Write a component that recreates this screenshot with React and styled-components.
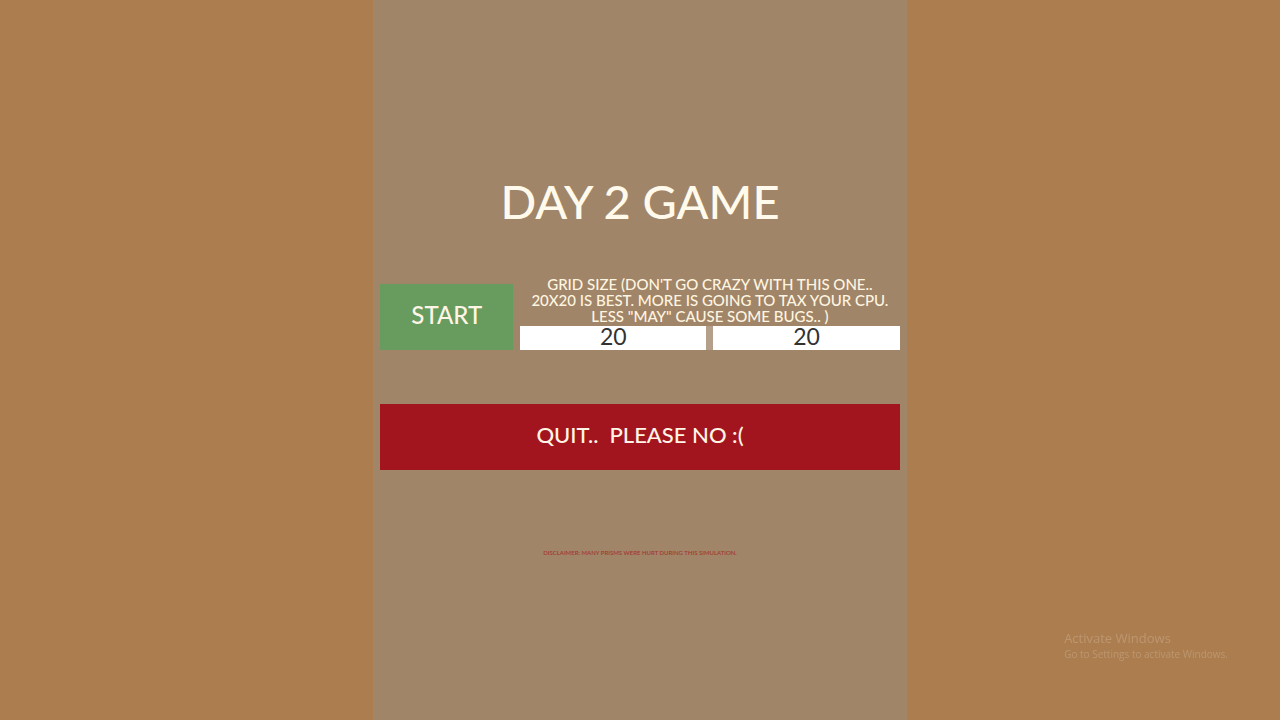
import React, { useState } from "react";
import styled, { createGlobalStyle } from "styled-components";

const App = () => {
    const [columns, setColumns] = useState("20");
    const [rows, setRows] = useState("20");

    return (
        <>
            <GlobalStyle />
            <Screen>
                <Panel>
                    <Title>DAY 2 GAME</Title>
                    <StartRow>
                        <MenuButton type="button" $color="#689b5e" $size="24px">START</MenuButton>
                        <GridSettings>
                            <Hint id="grid-hint" htmlFor="grid-columns">
                                GRID SIZE (DON'T GO CRAZY WITH THIS ONE..
                                <br />
                                20X20 IS BEST. MORE IS GOING TO TAX YOUR CPU.
                                <br />
                                LESS "MAY" CAUSE SOME BUGS.. )
                            </Hint>
                            <SizeInputs>
                                <SizeInput
                                    id="grid-columns"
                                    inputMode="numeric"
                                    value={columns}
                                    onChange={(e) => setColumns(e.target.value)}
                                />
                                <SizeInput
                                    id="grid-rows"
                                    aria-labelledby="grid-hint"
                                    inputMode="numeric"
                                    value={rows}
                                    onChange={(e) => setRows(e.target.value)}
                                />
                            </SizeInputs>
                        </GridSettings>
                    </StartRow>
                    <MenuButton type="button" $color="#a3151e" $size="22px">QUIT..&nbsp; PLEASE NO :(</MenuButton>
                    <Disclaimer>DISCLAIMER: MANY PRISMS WERE HURT DURING THIS SIMULATION.</Disclaimer>
                </Panel>
            </Screen>
            <Watermark>
                <WatermarkTitle>Activate Windows</WatermarkTitle>
                <WatermarkText>Go to Settings to activate Windows.</WatermarkText>
            </Watermark>
        </>
    );
};

export default App;


const GlobalStyle = createGlobalStyle`
    * {
        box-sizing: border-box;
    }

    body {
        margin: 0;
        background: #ac7e4f;
        font-family: Lato, "Open Sans", sans-serif;
    }
`;

const Screen = styled.main`
    display: grid;
    grid-template-columns: minmax(0, 7fr) minmax(0, 10fr) minmax(0, 7fr);
    min-height: 100vh;
`;

const Panel = styled.section`
    grid-column: 2;
    display: flex;
    flex-direction: column;
    justify-content: center;
    padding: 10px 7px 0;
    background: #a08568;
`;

const Title = styled.h1`
    margin: 0 0 46px;
    color: #fffaeb;
    font-size: 47px;
    font-weight: 500;
    line-height: 58px;
    text-align: center;
`;

const StartRow = styled.div`
    display: grid;
    grid-template-columns: minmax(0, 133fr) minmax(0, 380fr);
    align-items: end;
    gap: 7px;
    margin-bottom: 54px;
`;

const MenuButton = styled.button`
    width: 100%;
    height: 66px;
    padding: 0 0 6px;
    border: none;
    background: ${(props) => props.$color};
    color: #fff5e6;
    font-family: inherit;
    font-size: ${(props) => props.$size};
    font-weight: 500;
    cursor: pointer;

    &:hover {
        filter: brightness(1.1);
    }
`;

const GridSettings = styled.div`
    display: flex;
    flex-direction: column;
    gap: 2px;
`;

const Hint = styled.label`
    color: #fff5e0;
    font-size: 15px;
    font-weight: 500;
    line-height: 16px;
    text-align: center;
`;

const SizeInputs = styled.div`
    display: flex;
    gap: 7px;
    background: #b4a08a;
`;

const SizeInput = styled.input`
    flex: 1;
    width: 100%;
    min-width: 0;
    height: 24px;
    padding: 0 0 4px;
    border: none;
    background: #fff;
    color: #323232;
    font-family: inherit;
    font-size: 23px;
    text-align: center;
`;

const Disclaimer = styled.p`
    margin: 78px 0 0;
    color: #a5342d;
    font-size: 6px;
    font-weight: 500;
    line-height: 10px;
    text-align: center;
`;

const Watermark = styled.aside`
    position: fixed;
    right: 52px;
    bottom: 59px;
    color: #bd9670;
    font-family: "Open Sans", "Noto Sans", sans-serif;
    pointer-events: none;
`;

const WatermarkTitle = styled.p`
    margin: 0;
    font-size: 13px;
    line-height: 18px;
`;

const WatermarkText = styled.p`
    margin: 0;
    font-size: 10px;
    line-height: 14px;
`;
